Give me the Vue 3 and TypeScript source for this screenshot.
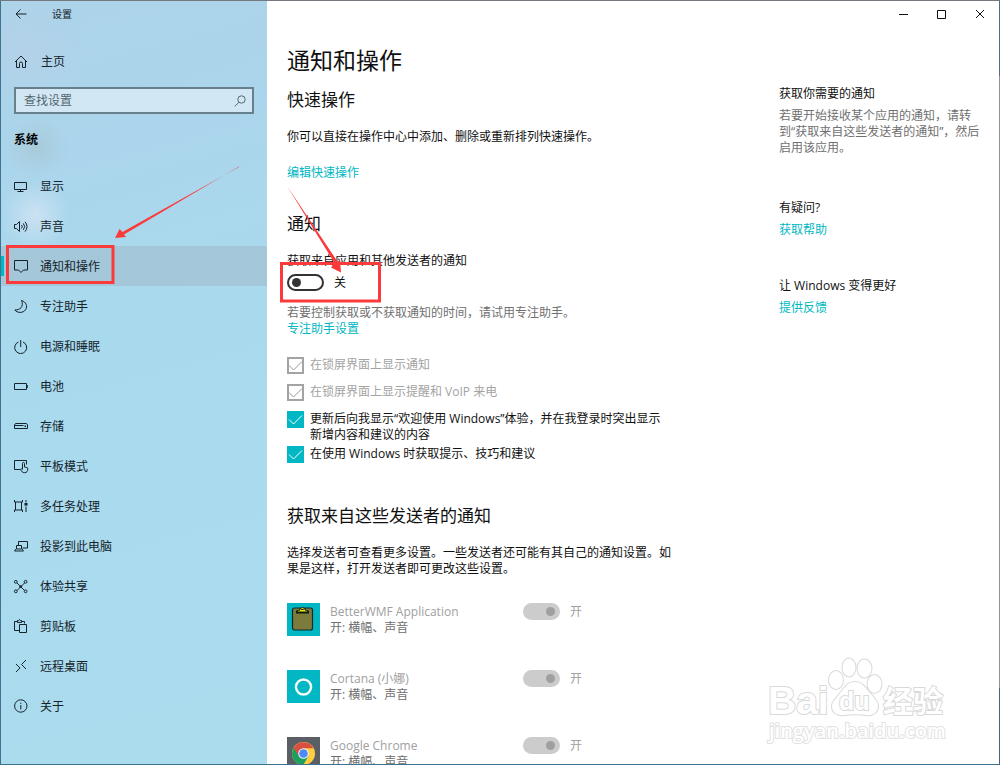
<script setup lang="ts">
import { ref } from 'vue'

interface NavItem {
  label: string
  paths: string[]
  solid?: string
}

interface CheckOption {
  id: string
  label: string
  checked: boolean
  disabled: boolean
}

interface Sender {
  id: string
  name: string
  detail: string
  enabled: boolean
}

const activeLabel = '通知和操作'

const navItems: NavItem[] = [
  { label: '显示', paths: ['M1.5 3.5h12v7h-12z', 'M7.5 10.5v2', 'M4.5 12.5h6'] },
  {
    label: '声音',
    paths: [
      'M1.5 5.5h2l3-3v10l-3-3h-2z',
      'M8.5 6a2.5 2.5 0 0 1 0 3.4',
      'M10.3 4.4a4.8 4.8 0 0 1 0 6.4',
      'M12 2.8a7 7 0 0 1 0 9.8',
    ],
  },
  { label: '通知和操作', paths: ['M1.5 1.5h13v9.5h-4l-2.5 2.5-2.5-2.5h-4z'] },
  { label: '专注助手', paths: ['M8.6 1.5C13 3 15 7 12.5 10.8C10 14.5 4 14 1.8 11C7 11 11 8 8.6 1.5z'] },
  { label: '电源和睡眠', paths: ['M5.4 3a6 6 0 1 0 4.6 0', 'M7.7 1v7'] },
  { label: '电池', paths: ['M1.5 4.5h12v6h-12z', 'M14.3 6v3'] },
  {
    label: '存储',
    paths: ['M2.5 4.5h11l1 1.5v3.5h-13v-3.5z', 'M2 6.5h8.5'],
    solid: 'M11.5 6.5h1.5v1.5h-1.5z',
  },
  {
    label: '平板模式',
    paths: [
      'M7 10.5h-5.5v-9h12v4',
      'M9.5 10v-5.5a1 1 0 0 1 2 0v3.5l2.5.5q.8.3.8 1.2c0 2.5-1 4-3.3 4c-2 0-2.8-1.2-4-3.4q1-1 2 .2',
    ],
  },
  {
    label: '多任务处理',
    paths: ['M1.5 1v2h8v-2', 'M1.5 13v-2h8v2', 'M2.5 3v8', 'M8.5 3v8', 'M13 1v2.5', 'M13 7.5v5.5'],
    solid: 'M11.5 4h3v2.6h-3z',
  },
  { label: '投影到此电脑', paths: ['M5.5 6v-3.5h9v6.500h-5', 'M3.5 6.5h5v3.5h-5z', 'M3 10l-1.5 2h9l-1.5-2'] },
  {
    label: '体验共享',
    paths: [
      'M4 4l7.5 7.5',
      'M11.5 4l-7.5 7.5',
      'M4.2 2.8a1.4 1.4 0 1 1-2.8 0a1.4 1.4 0 1 1 2.8 0',
      'M14 2.8a1.4 1.4 0 1 1-2.8 0a1.4 1.4 0 1 1 2.8 0',
      'M4.2 12.3a1.4 1.4 0 1 1-2.8 0a1.4 1.4 0 1 1 2.8 0',
      'M14 12.3a1.4 1.4 0 1 1-2.8 0a1.4 1.4 0 1 1 2.8 0',
    ],
    solid: 'M6.3 7.7a1.4 1.4 0 1 0 2.8 0a1.4 1.4 0 1 0-2.8 0',
  },
  {
    label: '剪贴板',
    paths: ['M6.5 11.5h-5v-9h2.5', 'M9 2.5h2.5v2', 'M4.5 3.5v-2h1.2l.8-1l.8 1h1.2v2z', 'M6.5 5.5h7v8h-7z'],
  },
  { label: '远程桌面', paths: ['M3 5l4 4l-4 4', 'M13 1l-4.5 4.5l4.5 4.5'] },
  {
    label: '关于',
    paths: ['M14 7a6.2 6.2 0 1 1-12.4 0a6.2 6.2 0 1 1 12.4 0', 'M7.8 6v4.5', 'M7.8 3.7v1.2'],
  },
]

const searchText = ref('')
const notificationsOn = ref(false)

const options = ref<CheckOption[]>([
  { id: 'lock-notify', label: '在锁屏界面上显示通知', checked: true, disabled: true },
  { id: 'lock-voip', label: '在锁屏界面上显示提醒和 VoIP 来电', checked: true, disabled: true },
  {
    id: 'welcome',
    label: '更新后向我显示“欢迎使用 Windows”体验，并在我登录时突出显示新增内容和建议的内容',
    checked: true,
    disabled: false,
  },
  { id: 'tips', label: '在使用 Windows 时获取提示、技巧和建议', checked: true, disabled: false },
])

const senders = ref<Sender[]>([
  { id: 'betterwmf', name: 'BetterWMF Application', detail: '开: 横幅、声音', enabled: true },
  { id: 'cortana', name: 'Cortana (小娜)', detail: '开: 横幅、声音', enabled: true },
  { id: 'chrome', name: 'Google Chrome', detail: '开: 横幅、声音', enabled: true },
])
</script>

<template>
  <div class="window">
    <aside class="sidebar">
      <header class="titlebar">
        <button class="back" type="button" aria-label="返回">
          <svg width="12" height="12" viewBox="0 0 12 12"><path d="M11.5 6H1M5.5 1.5L1 6l4.5 4.5" /></svg>
        </button>
        <span>设置</span>
      </header>

      <a class="home" href="#home">
        <svg width="16" height="16" viewBox="0 0 16 16">
          <path d="M2 8l6-6l6 6M3.5 7v6.5h3v-4a1.5 1.5 0 0 1 3 0v4h3v-6.5" />
        </svg>
        主页
      </a>

      <form class="search" role="search" @submit.prevent>
        <input v-model="searchText" type="text" placeholder="查找设置" aria-label="查找设置" />
        <button type="submit" aria-label="搜索">
          <svg width="12" height="12" viewBox="0 0 12 12">
            <circle cx="7.5" cy="4.5" r="3.7" />
            <path d="M5 7.2L.8 11.4" />
          </svg>
        </button>
      </form>

      <h2 class="group">系统</h2>

      <nav>
        <a
          v-for="item in navItems"
          :key="item.label"
          class="nav-item"
          :class="{ active: item.label === activeLabel }"
          :href="'#' + item.label"
        >
          <svg width="16" height="16" viewBox="0 0 16 16">
            <path v-for="d in item.paths" :key="d" :d="d" />
            <path v-if="item.solid" class="solid" :d="item.solid" />
          </svg>
          {{ item.label }}
        </a>
      </nav>
    </aside>

    <main class="content">
      <div class="controls">
        <button type="button" aria-label="最小化">
          <svg width="10" height="10" viewBox="0 0 10 10"><path d="M0 5.5h9" /></svg>
        </button>
        <button type="button" aria-label="最大化">
          <svg width="10" height="10" viewBox="0 0 10 10"><path d="M.5 1.5h8v8h-8z" /></svg>
        </button>
        <button type="button" aria-label="关闭">
          <svg width="10" height="10" viewBox="0 0 10 10"><path d="M1 1l8 8M9 1L1 9" /></svg>
        </button>
      </div>

      <div class="columns">
        <div class="primary">
          <h1>通知和操作</h1>

          <section class="quick">
            <h2>快速操作</h2>
            <p>你可以直接在操作中心中添加、删除或重新排列快速操作。</p>
            <a class="link" href="#quick-actions">编辑快速操作</a>
          </section>

          <section class="notify">
            <h2>通知</h2>
            <label class="caption" for="all-senders">获取来自应用和其他发送者的通知</label>
            <div class="switch-row">
              <input id="all-senders" v-model="notificationsOn" class="switch" type="checkbox" role="switch" />
              <span>{{ notificationsOn ? '开' : '关' }}</span>
            </div>
            <p class="muted">若要控制获取或不获取通知的时间，请试用专注助手。</p>
            <a class="link" href="#focus">专注助手设置</a>

            <div class="checks">
              <label v-for="opt in options" :key="opt.id" class="check" :class="{ off: opt.disabled }" :for="opt.id">
                <span class="box">
                  <input :id="opt.id" v-model="opt.checked" type="checkbox" :disabled="opt.disabled" />
                  <svg v-if="opt.checked" width="17" height="17" viewBox="0 0 17 17"><path d="M2 8.5l4.5 4.5l8.500-8.500" /></svg>
                </span>
                <span>{{ opt.label }}</span>
              </label>
            </div>
          </section>

          <section class="senders">
            <h2>获取来自这些发送者的通知</h2>
            <p>选择发送者可查看更多设置。一些发送者还可能有其自己的通知设置。如果是这样，打开发送者即可更改这些设置。</p>
            <ul>
              <li v-for="s in senders" :key="s.id">
                <svg v-if="s.id === 'betterwmf'" class="app" viewBox="0 0 33 33">
                  <rect width="33" height="33" fill="#00b7c3" />
                  <rect x="5.5" y="5" width="20" height="22" rx="2" fill="#7d7b3c" stroke="#12282a" stroke-width="1.2" />
                  <path d="M9 10.5V8.500q0-1.500 2-1.500h1q.5-2.500 3.500-2.500t3.500 2.500h1q2 0 2 1.500v2z" fill="#0b1a12" />
                  <path d="M10.500 8.500q.5-1 2.500-1q.3-2.500 2.500-2.500t2.500 2.500q2 0 2.500 1z" fill="#f2e90c" />
                  <path d="M14.3 6.500h2.400" stroke="#0b1a12" />
                </svg>
                <svg v-else-if="s.id === 'cortana'" class="app" viewBox="0 0 33 33">
                  <rect width="33" height="33" fill="#00b7c3" />
                  <circle cx="16.5" cy="17" r="7.6" fill="none" stroke="#d8f6f8" stroke-width="2.4" />
                  <circle cx="16.5" cy="17" r="7.3" fill="none" stroke="#fff" stroke-width="1.4" />
                </svg>
                <svg v-else class="app" viewBox="0 0 33 33">
                  <rect width="33" height="33" fill="#5a5f66" />
                  <circle cx="16.5" cy="16.5" r="11.5" fill="#ffcd40" />
                  <path d="M16.5 16.5L6.5 10.8A11.5 11.5 0 0 0 16.2 28L21.5 19z" fill="#1aa15f" />
                  <path d="M6.5 10.8A11.5 11.5 0 0 1 26.5 11.2H16.5L11.6 19z" fill="#db4f43" />
                  <circle cx="16.5" cy="16.5" r="5.3" fill="#f4f4f4" />
                  <circle cx="16.5" cy="16.5" r="4.3" fill="#4c8bf5" />
                </svg>
                <label class="who" :for="s.id">
                  <span class="name">{{ s.name }}</span>
                  <span class="detail">{{ s.detail }}</span>
                </label>
                <input :id="s.id" v-model="s.enabled" class="switch" type="checkbox" role="switch" disabled />
                <span class="state">{{ s.enabled ? '开' : '关' }}</span>
              </li>
            </ul>
          </section>
        </div>

        <aside class="related">
          <section>
            <h3>获取你需要的通知</h3>
            <p class="muted">若要开始接收某个应用的通知，请转到“获取来自这些发送者的通知”，然后启用该应用。</p>
          </section>
          <section>
            <h3>有疑问?</h3>
            <a class="link" href="#help">获取帮助</a>
          </section>
          <section>
            <h3>让 Windows 变得更好</h3>
            <a class="link" href="#feedback">提供反馈</a>
          </section>
        </aside>
      </div>
    </main>

    <svg class="watermark" width="190" height="92" viewBox="0 0 190 92" aria-label="Baidu 经验">
      <g class="outline">
        <text class="brand" x="4" y="59">Bai</text>
        <ellipse cx="72" cy="25" rx="7" ry="9" />
        <ellipse cx="85" cy="12.500" rx="6.500" ry="9" />
        <ellipse cx="100.500" cy="13.500" rx="7" ry="9" />
        <ellipse cx="110.500" cy="29" rx="7" ry="9" />
        <path d="M91 27c7 0 10 5 14 10c5 6 9 9 9 14c0 7-6 10-12 9c-7-1-15-1-22 0c-6 1-12-2-12-9c0-5 5-8 9-14c4-5 7-10 14-10z" />
        <text class="du" x="75" y="55">du</text>
        <text class="cjk" x="119" y="57">经验</text>
        <text class="site" x="5" y="83">jingyan.baidu.com</text>
      </g>
    </svg>

    <svg class="marks" width="400" height="320" viewBox="0 0 400 320" aria-hidden="true">
      <rect x="7.5" y="246.5" width="105.5" height="36" />
      <rect x="281.5" y="263.5" width="98" height="37.5" />
      <path d="M239 166.500L239 167L122.500 232L119.500 229L115 238L126 237L124 234.500Z" />
      <path d="M287 186L334.500 263L331 267.500L341 272.500L340 260.500L337.500 261.500Z" />
    </svg>
  </div>
</template>

<style>
html,
body {
  margin: 0;
  background: #fff;
}
</style>

<style scoped>
* {
  box-sizing: border-box;
}

.window {
  position: relative;
  display: flex;
  height: 100vh;
  padding: 1px;
  overflow: hidden;
  background:
    linear-gradient(#74797f, #74797f) top / 100% 1px no-repeat,
    linear-gradient(#3f7190, #3f7190) bottom / 100% 1px no-repeat,
    linear-gradient(#3f7190, #3f7190) left / 1px 100% no-repeat,
    linear-gradient(#566987 10%, #8d9296 10%, #8d9296 90%, #4a6284 90%) right / 1px 100% no-repeat;
  color: #101010;
  font: 12px/16px "Open Sans", "Noto Sans CJK SC", sans-serif;
}

h1,
h2,
h3,
p,
ul {
  margin: 0;
  padding: 0;
  font-weight: 400;
}

a {
  color: inherit;
  text-decoration: none;
}

button {
  display: grid;
  place-items: center;
  padding: 0;
  border: 0;
  background: none;
  color: inherit;
}

button svg,
.home svg,
.nav-item svg,
.box svg {
  fill: none;
  stroke: currentColor;
}

.sidebar {
  flex: 0 0 266px;
  color: #15232b;
  background:
    radial-gradient(circle at 34px 214px, rgba(215, 230, 244, 0.75), transparent 34px),
    radial-gradient(circle at 36px 146px, rgba(165, 190, 196, 0.45), transparent 32px),
    radial-gradient(circle at 24px 50px, rgba(184, 208, 232, 0.6), transparent 60px),
    linear-gradient(165deg, #acd3e9 0%, #abd5ec 20%, #a9d9ed 40%, #abdcee 100%);
}

.titlebar {
  display: flex;
  align-items: center;
  gap: 25px;
  height: 26px;
  padding-left: 14px;
  font-size: 10px;
}

.home {
  display: flex;
  align-items: center;
  gap: 12px;
  height: 40px;
  margin-top: 15px;
  padding-left: 12px;
}

.search {
  display: flex;
  height: 27px;
  margin: 5px 13px 0;
  border: 2px solid #68808c;
  background: rgba(255, 255, 255, 0.45);
  color: #52666f;
}

.search input {
  flex: 1;
  min-width: 0;
  padding: 0 8px;
  border: 0;
  outline: 0;
  background: none;
  font: inherit;
}

.search input::placeholder {
  color: #52666f;
  opacity: 1;
}

.search button {
  width: 24px;
}

.group {
  margin: 18px 0 18px 13px;
  color: #000;
  font-size: 12px;
  font-weight: 700;
  line-height: 16px;
}

.nav-item {
  display: flex;
  align-items: center;
  gap: 11px;
  height: 40px;
  padding: 2px 0 0 12px;
}

.nav-item .solid {
  fill: currentColor;
  stroke: none;
}

.nav-item.active {
  background: linear-gradient(#00b7c3, #00b7c3) left center / 3px 20px no-repeat, rgba(155, 170, 180, 0.35);
}

.content {
  flex: 1;
  min-width: 0;
  overflow: hidden;
  background: #fff;
}

.controls {
  display: flex;
  justify-content: flex-end;
  height: 26px;
}

.controls button {
  width: 38px;
}

.columns {
  display: flex;
  justify-content: space-between;
  gap: 24px;
  padding: 17px 17px 0 20px;
}

.primary {
  flex: 0 1 384px;
}

.related {
  flex: 0 0 203px;
  padding-top: 42px;
}

h1 {
  font-size: 23px;
  line-height: 32px;
}

.primary h2 {
  margin-bottom: 17px;
  font-size: 17px;
  line-height: 24px;
}

.quick {
  margin-top: 12px;
}

.link {
  display: block;
  color: #00b7c3;
}

.quick .link {
  margin-top: 20px;
}

.notify {
  margin-top: 31px;
}

.caption {
  display: block;
}

.switch-row {
  display: flex;
  align-items: center;
  gap: 10px;
  margin: 5px 0 14px;
}

.switch {
  display: flex;
  align-items: center;
  flex: none;
  width: 37px;
  height: 17px;
  margin: 0;
  padding: 0 3px;
  border: 2px solid #333;
  border-radius: 9px;
  appearance: none;
}

.switch::before {
  width: 9px;
  height: 9px;
  border-radius: 50%;
  background: #333;
  content: "";
}

.switch:checked {
  justify-content: flex-end;
}

.switch:disabled {
  border-color: #ccc;
  background: #ccc;
}

.switch:disabled::before {
  background: #a0a0a0;
}

.muted {
  color: #707070;
}

.checks {
  display: grid;
  gap: 10px;
  max-width: 380px;
  margin-top: 20px;
}

.check {
  display: flex;
  gap: 6px;
}

.check:last-child {
  margin-top: -7px;
}

.check.off {
  color: #a3a3a3;
}

.box {
  display: grid;
  flex: none;
  width: 17px;
  height: 17px;
}

.box input,
.box svg {
  grid-area: 1 / 1;
}

.box input {
  width: 17px;
  height: 17px;
  margin: 0;
  border: 2px solid #444;
  background: #fff;
  appearance: none;
}

.box input:checked {
  border-color: #00b7c3;
  background: #00b7c3;
}

.box input:disabled {
  border-color: #a3a3a3;
  background: #fff;
}

.box svg {
  color: #fff;
  pointer-events: none;
}

.off .box svg {
  color: #999;
}

.senders {
  margin-top: 41px;
}

.senders ul {
  display: grid;
  gap: 34px;
  margin-top: 26px;
  list-style: none;
}

.senders li {
  display: flex;
  align-items: flex-start;
  height: 33px;
}

.app {
  flex: none;
  width: 33px;
  height: 33px;
}

.who {
  display: grid;
  width: 193px;
  margin-left: 10px;
  padding-top: 1px;
}

.name,
.state {
  color: #a0a0a0;
}

.detail {
  color: #707070;
}

.state {
  margin-left: 10px;
  padding-top: 1px;
}

.related section + section {
  margin-top: 44px;
}

.related section:nth-child(3) {
  margin-top: 40px;
}

.related h3 {
  margin-bottom: 6px;
  font-size: 12px;
}

.watermark {
  position: absolute;
  right: 46px;
  bottom: 18px;
}

.outline {
  fill: #fff;
  stroke: #d9d9d9;
  stroke-width: 2px;
  paint-order: stroke;
  font-family: "Liberation Sans", "Noto Sans CJK SC", sans-serif;
  font-weight: 700;
}

.brand {
  font-size: 39px;
}

.du {
  font-size: 25px;
}

.cjk {
  font-size: 30px;
}

.site {
  stroke: #e2e2e2;
  font-family: "Open Sans", sans-serif;
  font-size: 20px;
  font-weight: 600;
}

.marks {
  position: absolute;
  top: 0;
  left: 0;
  pointer-events: none;
}

.marks rect {
  fill: none;
  stroke: #fb3b3b;
  stroke-width: 3px;
}

.marks path {
  fill: #fb3b3b;
}
</style>
